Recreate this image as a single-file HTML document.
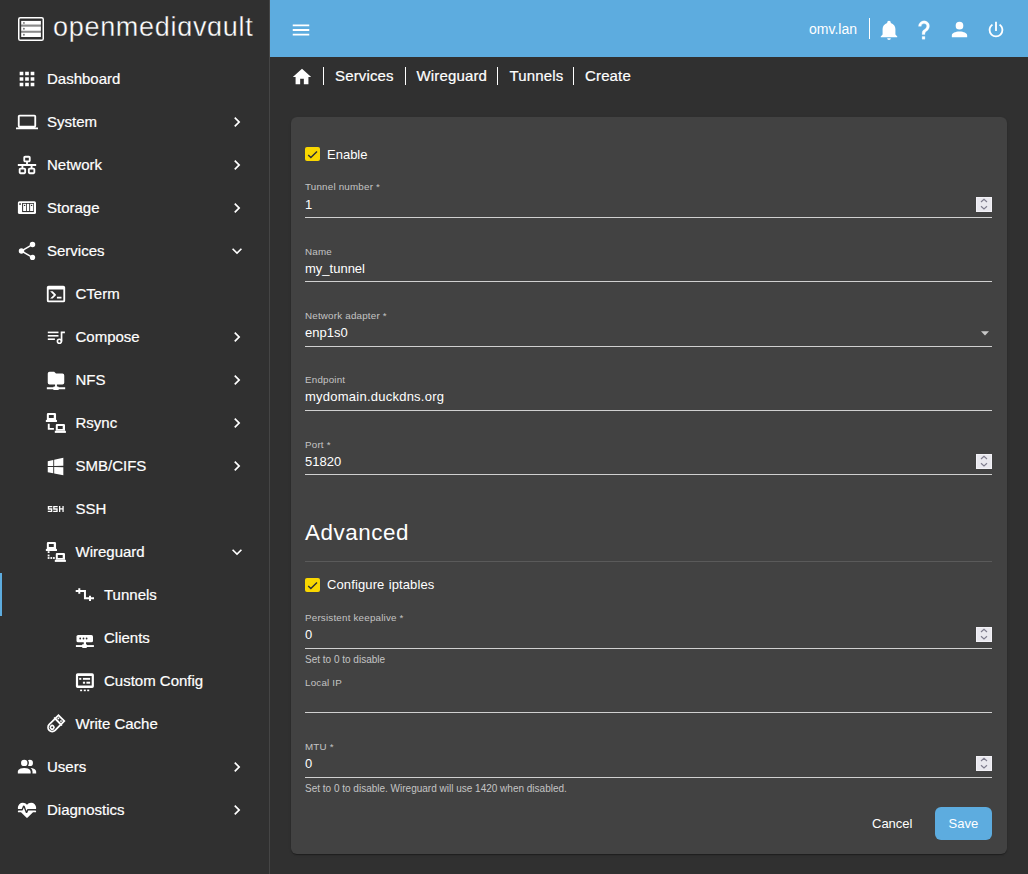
<!DOCTYPE html>
<html><head><meta charset="utf-8">
<style>
*{box-sizing:border-box;margin:0;padding:0}
html,body{width:1028px;height:874px;overflow:hidden;background:#303030;font-family:"Liberation Sans",sans-serif;color:#fff}
.abs{position:absolute}
.mt{position:absolute;line-height:43px;font-size:15px;color:#fff;white-space:nowrap;-webkit-text-stroke:0.2px #fff}
.bc{position:absolute;top:66px;font-size:15px;line-height:20px;color:#fff;white-space:nowrap;letter-spacing:0.15px;-webkit-text-stroke:0.2px #fff}
.lbl{position:absolute;left:305px;font-size:9.8px;line-height:12px;letter-spacing:0.2px;color:#c4c4c4;white-space:nowrap}
.val{position:absolute;left:305px;font-size:13px;line-height:16px;color:#fff;white-space:nowrap}
.ul{position:absolute;left:305px;width:687px;height:1px;background:#d0d0d0}
.hint{position:absolute;left:305px;font-size:10px;line-height:12px;color:#c4c4c4;white-space:nowrap}
.cb{position:absolute;left:305px;width:15px;height:14px;background:#f9d700;border-radius:2px}
.cbl{position:absolute;left:327px;font-size:13px;line-height:16px;color:#fff;white-space:nowrap}
.spin{position:absolute;left:976px;width:16px;height:15px;background:#e9e8ee;box-shadow:inset 0 0 0 1px #f3f2f7}
.spin svg{display:block}
</style></head><body>
<div class="abs" style="left:0;top:0;width:269px;height:874px;background:#303030"></div>
<div class="abs" style="left:269px;top:0;width:1px;height:874px;background:#454545"></div>
<svg class="abs" style="left:14px;top:14px" width="34" height="30" viewBox="14 14 34 30"><rect x="18.75" y="17.75" width="24.5" height="22.5" rx="1.6" fill="none" stroke="#fff" stroke-width="1.5"/><rect x="21.2" y="20.9" width="19.7" height="3.9" fill="#fff"/><rect x="21.2" y="24.8" width="19.7" height="1.7" fill="#8a8a8a"/><rect x="21.2" y="26.5" width="19.7" height="4.4" fill="#fff"/><rect x="21.2" y="30.9" width="19.7" height="1.7" fill="#8a8a8a"/><rect x="21.2" y="32.6" width="19.7" height="4.4" fill="#fff"/><circle cx="23.9" cy="22.9" r="0.95" fill="#7a7a7a"/><circle cx="23.9" cy="28.7" r="0.95" fill="#7a7a7a"/><circle cx="23.9" cy="34.8" r="0.95" fill="#7a7a7a"/></svg>
<div class="abs" style="left:53px;top:12px;font-size:27px;line-height:30px;letter-spacing:0.7px;color:#fff;white-space:nowrap;-webkit-text-stroke:0.35px #303030">openmedi&#593;v&#593;ult</div>
<svg class="abs" style="left:16px;top:67.5px" width="22" height="22" viewBox="0 0 24 24"><path fill="#fff" d="M16,20H20V16H16M16,14H20V10H16M10,8H14V4H10M16,8H20V4H16M10,14H14V10H10M4,14H8V10H4M4,20H8V16H4M10,20H14V16H10M4,8H8V4H4V8Z"/></svg>
<div class="mt" style="left:47px;top:57px">Dashboard</div>
<svg class="abs" style="left:16px;top:110.5px" width="22" height="22" viewBox="0 0 24 24"><path fill="#fff" d="M4,6H20V16H4M20,18A2,2 0 0,0 22,16V6C22,4.89 21.1,4 20,4H4C2.89,4 2,4.89 2,6V16A2,2 0 0,0 4,18H0V20H24V18H20Z"/></svg>
<div class="mt" style="left:47px;top:100px">System</div>
<svg class="abs" style="left:227px;top:111.5px" width="20" height="20" viewBox="0 0 24 24"><path fill="#fff" d="M8.59,16.58L13.17,12L8.59,7.41L10,6L16,12L10,18L8.59,16.58Z"/></svg>
<svg class="abs" style="left:16px;top:153.5px" width="22" height="22" viewBox="0 0 24 24"><path fill="#fff" d="M10,2C8.89,2 8,2.89 8,4V7C8,8.11 8.89,9 10,9H11V11H2V13H6V15H5C3.89,15 3,15.89 3,17V20C3,21.11 3.89,22 5,22H9C10.11,22 11,21.11 11,20V17C11,15.89 10.11,15 9,15H8V13H16V15H15C13.89,15 13,15.89 13,17V20C13,21.11 13.89,22 15,22H19C20.11,22 21,21.11 21,20V17C21,15.89 20.11,15 19,15H18V13H22V11H13V9H14C15.11,9 16,8.11 16,7V4C16,2.89 15.11,2 14,2H10M10,4H14V7H10V4M5,17H9V20H5V17M15,17H19V20H15V17Z"/></svg>
<div class="mt" style="left:47px;top:143px">Network</div>
<svg class="abs" style="left:227px;top:154.5px" width="20" height="20" viewBox="0 0 24 24"><path fill="#fff" d="M8.59,16.58L13.17,12L8.59,7.41L10,6L16,12L10,18L8.59,16.58Z"/></svg>
<svg class="abs" style="left:14px;top:196px" width="26" height="24" viewBox="14 196 26 24"><rect x="17.9" y="201.2" width="18.1" height="12.9" rx="1.6" fill="#fff"/><rect x="22.1" y="203" width="11.8" height="9.1" fill="#303030"/><rect x="23.1" y="203.8" width="3.0" height="7.2" fill="#fff"/><rect x="26.9" y="203.8" width="2.3000000000000007" height="7.2" fill="#fff"/><rect x="30.1" y="203.8" width="3.1000000000000014" height="7.2" fill="#fff"/><circle cx="24.6" cy="205.4" r="0.7" fill="#303030"/><circle cx="31.6" cy="205.4" r="0.7" fill="#303030"/><rect x="19.2" y="203.3" width="1.7" height="1.5" fill="#303030"/></svg>
<div class="mt" style="left:47px;top:186px">Storage</div>
<svg class="abs" style="left:227px;top:197.5px" width="20" height="20" viewBox="0 0 24 24"><path fill="#fff" d="M8.59,16.58L13.17,12L8.59,7.41L10,6L16,12L10,18L8.59,16.58Z"/></svg>
<svg class="abs" style="left:16px;top:239.5px" width="22" height="22" viewBox="0 0 24 24"><path fill="#fff" d="M18,16.08C17.24,16.08 16.56,16.38 16.04,16.85L8.91,12.7C8.96,12.47 9,12.24 9,12C9,11.76 8.96,11.53 8.91,11.3L15.96,7.19C16.5,7.69 17.21,8 18,8A3,3 0 0,0 21,5A3,3 0 0,0 18,2A3,3 0 0,0 15,5C15,5.24 15.04,5.47 15.09,5.7L8.04,9.81C7.5,9.31 6.79,9 6,9A3,3 0 0,0 3,12A3,3 0 0,0 6,15C6.79,15 7.5,14.69 8.04,14.19L15.16,18.34C15.11,18.55 15.08,18.77 15.08,19C15.08,20.61 16.39,21.91 18,21.91C19.61,21.91 20.92,20.61 20.92,19A2.92,2.92 0 0,0 18,16.08Z"/></svg>
<div class="mt" style="left:47px;top:229px">Services</div>
<svg class="abs" style="left:227px;top:240.5px" width="20" height="20" viewBox="0 0 24 24"><path fill="#fff" d="M7.41,8.58L12,13.17L16.59,8.58L18,10L12,16L6,10L7.41,8.58Z"/></svg>
<svg class="abs" style="left:45px;top:282.5px" width="22" height="22" viewBox="0 0 24 24"><path fill="#fff" d="M20,19V7H4V19H20M20,3A2,2 0 0,1 22,5V19A2,2 0 0,1 20,21H4A2,2 0 0,1 2,19V5C2,3.89 2.9,3 4,3H20M13,17V15H18V17H13M9.58,13L5.57,9H8.4L11.7,12.3C12.09,12.69 12.09,13.33 11.7,13.72L8.42,17H5.59L9.58,13Z"/></svg>
<div class="mt" style="left:75.5px;top:272px">CTerm</div>
<svg class="abs" style="left:43px;top:323px" width="26" height="26" viewBox="43 323 26 26"><rect x="47.8" y="331.6" width="10.7" height="1.6" fill="#fff"/><rect x="47.8" y="335" width="10.7" height="1.6" fill="#fff"/><rect x="47.8" y="338.4" width="7.1" height="1.6" fill="#fff"/><path fill="#fff" d="M60.7,331.5H64.9V333.2H62.4V341.5H60.7Z"/><circle cx="59.4" cy="341.2" r="2" fill="none" stroke="#fff" stroke-width="1.6"/></svg>
<div class="mt" style="left:75.5px;top:315px">Compose</div>
<svg class="abs" style="left:227px;top:326.5px" width="20" height="20" viewBox="0 0 24 24"><path fill="#fff" d="M8.59,16.58L13.17,12L8.59,7.41L10,6L16,12L10,18L8.59,16.58Z"/></svg>
<svg class="abs" style="left:45px;top:368.5px" width="22" height="22" viewBox="0 0 24 24"><path fill="#fff" d="M3,15V5A2,2 0 0,1 5,3H10L12,5H19A2,2 0 0,1 21,7V15A2,2 0 0,1 19,17H13V19H14A1,1 0 0,1 15,20H22V22H15A1,1 0 0,1 14,23H10A1,1 0 0,1 9,22H2V20H9A1,1 0 0,1 10,19H11V17H5A2,2 0 0,1 3,15Z"/></svg>
<div class="mt" style="left:75.5px;top:358px">NFS</div>
<svg class="abs" style="left:227px;top:369.5px" width="20" height="20" viewBox="0 0 24 24"><path fill="#fff" d="M8.59,16.58L13.17,12L8.59,7.41L10,6L16,12L10,18L8.59,16.58Z"/></svg>
<svg class="abs" style="left:43px;top:409px" width="26" height="28" viewBox="43 409 26 28"><path fill="#fff" fill-rule="evenodd" d="M48.050000000000004,413H54.85A1.2,1.2 0 0 1 56.05,414.2V419.9H46.85V414.2A1.2,1.2 0 0 1 48.050000000000004,413ZM48.85,415.1V418.1H53.75V415.1Z"/><rect x="45.85" y="419.9" width="11.1" height="2.1" fill="#fff"/><path fill="#fff" d="M47.8,423.7H49.7V427.9H53.9V429.8H47.8Z"/><path fill="#fff" fill-rule="evenodd" d="M57.0,423.9H63.8A1.2,1.2 0 0 1 65.0,425.09999999999997V430.79999999999995H55.8V425.09999999999997A1.2,1.2 0 0 1 57.0,423.9ZM57.8,426.0V429.0H62.699999999999996V426.0Z"/><rect x="54.8" y="430.79999999999995" width="11.1" height="2.1" fill="#fff"/></svg>
<div class="mt" style="left:75.5px;top:401px">Rsync</div>
<svg class="abs" style="left:227px;top:412.5px" width="20" height="20" viewBox="0 0 24 24"><path fill="#fff" d="M8.59,16.58L13.17,12L8.59,7.41L10,6L16,12L10,18L8.59,16.58Z"/></svg>
<svg class="abs" style="left:45px;top:454.5px" width="22" height="22" viewBox="0 0 24 24"><path fill="#fff" d="M3,12V6.75L9,5.43V11.91L3,12M20,3V11.75L10,11.9V5.21L20,3M3,13L9,13.09V19.9L3,18.75V13M20,13.25V22L10,20.09V13.1L20,13.25Z"/></svg>
<div class="mt" style="left:75.5px;top:444px">SMB/CIFS</div>
<svg class="abs" style="left:227px;top:455.5px" width="20" height="20" viewBox="0 0 24 24"><path fill="#fff" d="M8.59,16.58L13.17,12L8.59,7.41L10,6L16,12L10,18L8.59,16.58Z"/></svg>
<svg class="abs" style="left:43px;top:495px" width="26" height="26" viewBox="43 495 26 26"><path fill="none" stroke="#fff" stroke-width="1.3" stroke-linejoin="miter" d="M52.3,506.55H48.449999999999996V509H51.65V511.35H47.8"/><path fill="none" stroke="#fff" stroke-width="1.3" stroke-linejoin="miter" d="M57.7,506.55H53.85V509H57.050000000000004V511.35H53.2"/><path fill="none" stroke="#fff" stroke-width="1.3" d="M59.65,505.9V512M63.05,505.9V512M59.65,508.95H63.05"/></svg>
<div class="mt" style="left:75.5px;top:487px">SSH</div>
<svg class="abs" style="left:43px;top:538px" width="26" height="28" viewBox="43 538 26 28"><path fill="#fff" fill-rule="evenodd" d="M48.050000000000004,542H54.85A1.2,1.2 0 0 1 56.05,543.2V548.9H46.85V543.2A1.2,1.2 0 0 1 48.050000000000004,542ZM48.85,544.1V547.1H53.75V544.1Z"/><rect x="45.85" y="548.9" width="11.1" height="2.1" fill="#fff"/><rect x="47.7" y="551.2" width="1.8" height="1.8" fill="#fff"/><rect x="47.7" y="554.6" width="1.8" height="1.8" fill="#fff"/><rect x="47.7" y="557.1" width="1.8" height="1.8" fill="#fff"/><rect x="50.4" y="557.1" width="1.8" height="1.8" fill="#fff"/><rect x="53.0" y="557.1" width="1.8" height="1.8" fill="#fff"/><path fill="#fff" fill-rule="evenodd" d="M57.0,552.9H63.8A1.2,1.2 0 0 1 65.0,554.1V559.8H55.8V554.1A1.2,1.2 0 0 1 57.0,552.9ZM57.8,555.0V558.0H62.699999999999996V555.0Z"/><rect x="54.8" y="559.8" width="11.1" height="2.1" fill="#fff"/></svg>
<div class="mt" style="left:75.5px;top:530px">Wireguard</div>
<svg class="abs" style="left:227px;top:541.5px" width="20" height="20" viewBox="0 0 24 24"><path fill="#fff" d="M7.41,8.58L12,13.17L16.59,8.58L18,10L12,16L6,10L7.41,8.58Z"/></svg>
<svg class="abs" style="left:72px;top:582px" width="26" height="26" viewBox="72 582 26 26"><path fill="none" stroke="#fff" stroke-width="2" stroke-linejoin="miter" d="M75.7,591.05H84.95V598.3H94"/><path fill="none" stroke="#fff" stroke-width="2" d="M79.3,588.25V593.8M90,595.7V601"/></svg>
<div class="mt" style="left:104px;top:573px">Tunnels</div>
<svg class="abs" style="left:72px;top:625px" width="26" height="26" viewBox="72 625 26 26"><rect x="76.5" y="635" width="16.5" height="7.3" rx="1.6" fill="#fff"/><circle cx="80.2" cy="638.5" r="0.9" fill="#303030"/><circle cx="83.5" cy="638.5" r="0.9" fill="#303030"/><circle cx="86.6" cy="638.5" r="0.9" fill="#303030"/><rect x="83.75" y="642" width="2.25" height="3" fill="#fff"/><rect x="75.9" y="645.1" width="18" height="1.9" fill="#fff"/><rect x="82" y="644.3" width="5" height="3.6" rx="0.8" fill="#fff"/></svg>
<div class="mt" style="left:104px;top:616px">Clients</div>
<svg class="abs" style="left:72px;top:667px" width="26" height="28" viewBox="72 667 26 28"><path fill="#fff" fill-rule="evenodd" d="M77.6,673.2H92.2A1.7,1.7 0 0 1 93.9,674.9V686.3A1.7,1.7 0 0 1 92.2,688H77.6A1.7,1.7 0 0 1 75.9,686.3V674.9A1.7,1.7 0 0 1 77.6,673.2ZM78.1,676.1V685.6H91.7V676.1Z"/><rect x="79.2" y="677.9" width="2.1" height="1.9" fill="#fff"/><rect x="82.9" y="677.9" width="7.2" height="1.9" fill="#fff"/><rect x="82.9" y="681.7" width="2.2" height="2" fill="#fff"/><rect x="86.4" y="681.7" width="3.7" height="2" fill="#fff"/><rect x="80.1" y="689.6" width="2" height="1.6" fill="#fff"/><rect x="83.8" y="689.6" width="2" height="1.6" fill="#fff"/><rect x="87.2" y="689.6" width="2" height="1.6" fill="#fff"/></svg>
<div class="mt" style="left:104px;top:659px">Custom Config</div>
<svg class="abs" style="left:42px;top:709px" width="26" height="28" viewBox="42 709 26 28"><g transform="translate(62,717.55) rotate(45)"><path fill="none" stroke="#fff" stroke-width="1.8" d="M-4.1,5.6V13.9A4.1,4.1 0 0 0 4.1,13.9V5.6"/><path fill="none" stroke="#fff" stroke-width="1.8" d="M-4.1,5.6V0.9H4.1V5.6Z"/><rect x="-5.6" y="4.8" width="11.2" height="1.6" fill="#fff"/><rect x="-2.7" y="2.4" width="1.6" height="1.6" fill="#fff"/><rect x="1" y="2.4" width="1.6" height="1.6" fill="#fff"/><circle cx="0" cy="13.9" r="1.8" fill="none" stroke="#fff" stroke-width="1.6"/></g></svg>
<div class="mt" style="left:75.5px;top:702px">Write Cache</div>
<svg class="abs" style="left:16px;top:755.5px" width="22" height="22" viewBox="0 0 24 24"><path fill="#fff" d="M16,17V19H2V17C2,17 2,13 9,13C16,13 16,17 16,17M12.5,7.5A3.5,3.5 0 1,0 9,11A3.5,3.5 0 0,0 12.5,7.5M15.94,13A5.32,5.32 0 0,1 18,17V19H22V17C22,17 22,13.37 15.94,13M15,4A3.39,3.39 0 0,0 13.07,4.59A5,5 0 0,1 13.07,10.41A3.39,3.39 0 0,0 15,11A3.5,3.5 0 0,0 18.5,7.5A3.5,3.5 0 0,0 15,4Z"/></svg>
<div class="mt" style="left:47px;top:745px">Users</div>
<svg class="abs" style="left:227px;top:756.5px" width="20" height="20" viewBox="0 0 24 24"><path fill="#fff" d="M8.59,16.58L13.17,12L8.59,7.41L10,6L16,12L10,18L8.59,16.58Z"/></svg>
<svg class="abs" style="left:16px;top:798.5px" width="22" height="22" viewBox="0 0 24 24"><path fill="#fff" d="M7.5,4A5.5,5.5 0 0,0 2,9.5C2,10 2.09,10.5 2.22,11H6.3L7.57,7.63C7.87,6.83 9.05,6.75 9.43,7.63L11.5,13L12.09,11.58C12.22,11.25 12.57,11 13,11H21.78C21.91,10.5 22,10 22,9.5A5.5,5.5 0 0,0 16.5,4C14.64,4 13,4.93 12,6.34C11,4.930 9.36,4 7.5,4V4M3,12.5A1,1 0 0,0 2,13.5A1,1 0 0,0 3,14.5H5.44L11,20C12,20.9 12,20.9 13,20L18.56,14.5H21A1,1 0 0,0 22,13.5A1,1 0 0,0 21,12.5H13.4L12.47,14.69C12.07,15.5 10.92,15.5 10.55,14.69L8.5,9.26L7.540,11.83C7.39,12.21 7.05,12.5 6.6,12.5H3Z"/></svg>
<div class="mt" style="left:47px;top:788px">Diagnostics</div>
<svg class="abs" style="left:227px;top:799.5px" width="20" height="20" viewBox="0 0 24 24"><path fill="#fff" d="M8.59,16.58L13.17,12L8.59,7.41L10,6L16,12L10,18L8.59,16.58Z"/></svg>
<div class="abs" style="left:0;top:573px;width:2px;height:43px;background:#5dacdf"></div>
<div class="abs" style="left:270px;top:0;width:758px;height:57px;background:#5dacdf"></div>
<svg class="abs" style="left:290px;top:19px" width="22" height="22" viewBox="0 0 24 24"><path fill="#fff" d="M3,6H21V8H3V6M3,11H21V13H3V11M3,16H21V18H3V16Z"/></svg>
<div class="abs" style="left:809px;top:20px;font-size:14px;line-height:18px;color:#fff">omv.lan</div>
<div class="abs" style="left:869px;top:18px;width:1px;height:21px;background:#fff"></div>
<svg class="abs" style="left:878px;top:19px" width="22" height="22" viewBox="0 0 24 24"><path fill="#fff" d="M21,19V20H3V19L5,17V11C5,7.9 7.03,5.17 10,4.29C10,4.19 10,4.1 10,4A2,2 0 0,1 12,2A2,2 0 0,1 14,4C14,4.1 14,4.19 14,4.29C16.97,5.17 19,7.9 19,11V17L21,19M14,21A2,2 0 0,1 12,23A2,2 0 0,1 10,21"/></svg>
<svg class="abs" style="left:913.2px;top:18.6px" width="22" height="22" viewBox="0 0 24 24"><path fill="#fff" stroke="#fff" stroke-width="0.3" d="M10,19H13V22H10V19M12,2C17.35,2.22 19.68,7.62 16.5,11.67C15.670,12.67 14.33,13.33 13.67,14.17C13,15 13,16 13,17H10C10,15.33 10,13.92 10.67,12.92C11.33,11.92 12.67,11.33 13.5,10.67C15.92,8.43 15.32,5.26 12,5A3,3 0 0,0 9,8H6A6,6 0 0,1 12,2Z"/></svg>
<svg class="abs" style="left:948px;top:18.4px" width="23" height="23" viewBox="0 0 24 24"><path fill="#fff" d="M12,4A4,4 0 0,1 16,8A4,4 0 0,1 12,12A4,4 0 0,1 8,8A4,4 0 0,1 12,4M12,14C16.42,14 20,15.79 20,18V20H4V18C4,15.79 7.58,14 12,14Z"/></svg>
<svg class="abs" style="left:985.2px;top:19px" width="22" height="22" viewBox="0 0 24 24"><path fill="#fff" d="M16.56,5.44L15.11,6.89C16.84,7.94 18,9.830 18,12A6,6 0 0,1 12,18A6,6 0 0,1 6,12C6,9.83 7.16,7.94 8.88,6.88L7.44,5.44C5.36,6.88 4,9.28 4,12A8,8 0 0,0 12,20A8,8 0 0,0 20,12C20,9.28 18.64,6.88 16.56,5.44M13,3H11V13H13"/></svg>
<svg class="abs" style="left:291px;top:65.5px" width="22" height="22" viewBox="0 0 24 24"><path fill="#fff" d="M10,20V14H14V20H19V12H22L12,3L2,12H5V20H10Z"/></svg>
<div class="abs" style="left:323px;top:67px;width:1px;height:18px;background:#fff"></div>
<div class="abs" style="left:405px;top:67px;width:1px;height:18px;background:#fff"></div>
<div class="abs" style="left:497px;top:67px;width:1px;height:18px;background:#fff"></div>
<div class="abs" style="left:573px;top:67px;width:1px;height:18px;background:#fff"></div>
<div class="bc" style="left:335px">Services</div>
<div class="bc" style="left:416.5px">Wireguard</div>
<div class="bc" style="left:509.5px">Tunnels</div>
<div class="bc" style="left:585px">Create</div>
<div class="abs" style="left:291px;top:117px;width:716px;height:737px;background:#424242;border-radius:6px;box-shadow:0 2px 1px -1px rgba(0,0,0,.2),0 1px 1px 0 rgba(0,0,0,.14),0 1px 3px 0 rgba(0,0,0,.12)"></div>
<div class="cb" style="top:147px"><svg viewBox="0 0 24 24" width="13" height="13" style="position:absolute;left:1px;top:1px"><path fill="none" stroke="#2b2d37" stroke-width="2.6" d="M4.1,12.7 9,17.6 20.3,6.3"/></svg></div>
<div class="cbl" style="top:147px">Enable</div>
<div class="lbl" style="top:181px">Tunnel number *</div>
<div class="val" style="top:197px">1</div>
<div class="ul" style="top:217px"></div>
<div class="spin" style="top:197px"><svg viewBox="0 0 16 15" width="16" height="15"><path fill="none" stroke="#7f7d8e" stroke-width="1.15" d="M5,5 8,2.3 11,5M5,9.2 8,11.9 11,9.2"/></svg></div>
<div class="lbl" style="top:246px">Name</div>
<div class="val" style="top:261px">my_tunnel</div>
<div class="ul" style="top:281px"></div>
<div class="lbl" style="top:310px">Network adapter *</div>
<div class="val" style="top:325px">enp1s0</div>
<div class="ul" style="top:346px"></div>
<svg class="abs" style="left:981px;top:331px" width="8" height="5" viewBox="0 0 8 5"><path fill="#c8c8c8" d="M0,0.2H8L4,4.5Z"/></svg>
<div class="lbl" style="top:374px">Endpoint</div>
<div class="val" style="top:389px"><span style="letter-spacing:0.24px">mydomain.duckdns.org</span></div>
<div class="ul" style="top:410px"></div>
<div class="lbl" style="top:439px">Port *</div>
<div class="val" style="top:454px">51820</div>
<div class="ul" style="top:474px"></div>
<div class="spin" style="top:454px"><svg viewBox="0 0 16 15" width="16" height="15"><path fill="none" stroke="#7f7d8e" stroke-width="1.15" d="M5,5 8,2.3 11,5M5,9.2 8,11.9 11,9.2"/></svg></div>
<div class="abs" style="left:305px;top:519px;font-size:22.4px;line-height:28px;letter-spacing:0.55px;color:#fff">Advanced</div>
<div class="abs" style="left:305px;top:561px;width:687px;height:1px;background:#5a5a5a"></div>
<div class="cb" style="top:578px"><svg viewBox="0 0 24 24" width="13" height="13" style="position:absolute;left:1px;top:1px"><path fill="none" stroke="#2b2d37" stroke-width="2.6" d="M4.1,12.7 9,17.6 20.3,6.3"/></svg></div>
<div class="cbl" style="top:577px"><span style="letter-spacing:0.12px;word-spacing:0.5px">Configure iptables</span></div>
<div class="lbl" style="top:612px">Persistent keepalive *</div>
<div class="val" style="top:627px">0</div>
<div class="ul" style="top:648px"></div>
<div class="spin" style="top:627px"><svg viewBox="0 0 16 15" width="16" height="15"><path fill="none" stroke="#7f7d8e" stroke-width="1.15" d="M5,5 8,2.3 11,5M5,9.2 8,11.9 11,9.2"/></svg></div>
<div class="hint" style="top:654px">Set to 0 to disable</div>
<div class="lbl" style="top:677px">Local IP</div>
<div class="ul" style="top:712px"></div>
<div class="lbl" style="top:741px">MTU *</div>
<div class="val" style="top:756px">0</div>
<div class="ul" style="top:777px"></div>
<div class="spin" style="top:756px"><svg viewBox="0 0 16 15" width="16" height="15"><path fill="none" stroke="#7f7d8e" stroke-width="1.15" d="M5,5 8,2.3 11,5M5,9.2 8,11.9 11,9.2"/></svg></div>
<div class="hint" style="top:783px">Set to 0 to disable. Wireguard will use 1420 when disabled.</div>
<div class="abs" style="left:872px;top:816px;font-size:13px;line-height:16px;color:#fff">Cancel</div>
<div class="abs" style="left:935px;top:807px;width:57px;height:33px;border-radius:6px;background:#5dacdf"></div>
<div class="abs" style="left:948.5px;top:816px;font-size:13px;line-height:16px;color:#fff">Save</div>
</body></html>
